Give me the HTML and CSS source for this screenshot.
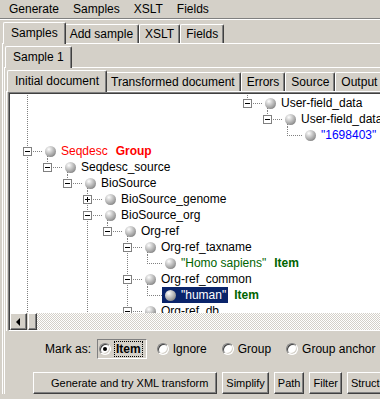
FILE: index.html
```html
<!DOCTYPE html>
<html lang="en">
<head>
    <meta charset="UTF-8">
    <title>XSLT generator</title>
    <link rel="stylesheet" href="styles.css">
</head>
<body>
<div class="app">
    <div class="menubar">
        <span class="menu">Generate</span>
        <span class="menu">Samples</span>
        <span class="menu">XSLT</span>
        <span class="menu">Fields</span>
    </div>

    <div class="tabpane outer">
        <div class="tabs">
            <div class="tab active">Samples</div>
            <div class="tab">Add sample</div>
            <div class="tab">XSLT</div>
            <div class="tab">Fields</div>
        </div>
        <div class="tabbody">
            <div class="tabpane">
                <div class="tabs">
                    <div class="tab active">Sample 1</div>
                </div>
                <div class="tabbody">
                    <div class="tabpane">
                        <div class="tabs">
                            <div class="tab active">Initial document</div>
                            <div class="tab">Transformed document</div>
                            <div class="tab">Errors</div>
                            <div class="tab">Source</div>
                            <div class="tab">Output</div>
                        </div>
                        <div class="tabbody">
                            <div class="scroll">
                                <div class="scroll-inner">
                                    <div class="tree">
                                        <!-- g = guide column, n = node column, cn = connector, lb = label -->
                                        <div class="row"><i class="g v"></i><i class="g"></i><i class="g"></i><i class="g"></i><i class="g"></i><i class="g"></i><i class="g"></i><i class="g"></i><i class="g"></i><i class="g"></i><i class="g"></i><i class="n"><b class="box"></b></i><i class="cn"></i><span class="lb open"><i class="ball"></i>User-field_data</span></div>
                                        <div class="row"><i class="g v"></i><i class="g"></i><i class="g"></i><i class="g"></i><i class="g"></i><i class="g"></i><i class="g"></i><i class="g"></i><i class="g"></i><i class="g"></i><i class="g"></i><i class="g"></i><i class="n"><b class="box"></b></i><i class="cn"></i><span class="lb open"><i class="ball"></i>User-field_data</span></div>
                                        <div class="row"><i class="g v"></i><i class="g"></i><i class="g"></i><i class="g"></i><i class="g"></i><i class="g"></i><i class="g"></i><i class="g"></i><i class="g"></i><i class="g"></i><i class="g"></i><i class="g"></i><i class="g"></i><i class="n"></i><i class="cn"></i><span class="lb blue"><i class="ball"></i>"1698403"</span></div>
                                        <div class="row"><i class="n dn"><b class="box"></b></i><i class="cn"></i><span class="lb open red"><i class="ball"></i>Seqdesc</span><b class="tag red">Group</b></div>
                                        <div class="row"><i class="g v"></i><i class="n"><b class="box"></b></i><i class="cn"></i><span class="lb open"><i class="ball"></i>Seqdesc_source</span></div>
                                        <div class="row"><i class="g v"></i><i class="g"></i><i class="n"><b class="box"></b></i><i class="cn"></i><span class="lb open"><i class="ball"></i>BioSource</span></div>
                                        <div class="row"><i class="g v"></i><i class="g"></i><i class="g"></i><i class="n dn"><b class="box plus"></b></i><i class="cn"></i><span class="lb"><i class="ball"></i>BioSource_genome</span></div>
                                        <div class="row"><i class="g v"></i><i class="g"></i><i class="g"></i><i class="n dn"><b class="box"></b></i><i class="cn"></i><span class="lb open"><i class="ball"></i>BioSource_org</span></div>
                                        <div class="row"><i class="g v"></i><i class="g"></i><i class="g"></i><i class="g v"></i><i class="n"><b class="box"></b></i><i class="cn"></i><span class="lb open"><i class="ball"></i>Org-ref</span></div>
                                        <div class="row"><i class="g v"></i><i class="g"></i><i class="g"></i><i class="g v"></i><i class="g"></i><i class="n dn"><b class="box"></b></i><i class="cn"></i><span class="lb open"><i class="ball"></i>Org-ref_taxname</span></div>
                                        <div class="row"><i class="g v"></i><i class="g"></i><i class="g"></i><i class="g v"></i><i class="g"></i><i class="g v"></i><i class="n"></i><i class="cn"></i><span class="lb green"><i class="ball"></i>"Homo sapiens"</span><b class="tag green">Item</b></div>
                                        <div class="row"><i class="g v"></i><i class="g"></i><i class="g"></i><i class="g v"></i><i class="g"></i><i class="n dn"><b class="box"></b></i><i class="cn"></i><span class="lb open"><i class="ball"></i>Org-ref_common</span></div>
                                        <div class="row"><i class="g v"></i><i class="g"></i><i class="g"></i><i class="g v"></i><i class="g"></i><i class="g v"></i><i class="n"></i><i class="cn"></i><span class="lb sel"><i class="ball"></i>"human"</span><b class="tag green">Item</b></div>
                                        <div class="row"><i class="g v"></i><i class="g"></i><i class="g"></i><i class="g v"></i><i class="g"></i><i class="n"><b class="box"></b></i><i class="cn"></i><span class="lb open"><i class="ball"></i>Org-ref_db</span></div>
                                    </div>
                                    <div class="hscroll">
                                        <div class="arrow"><i class="tri"></i></div>
                                        <div class="thumb"></div>
                                        <div class="track"></div>
                                    </div>
                                </div>
                            </div>
                        </div>
                    </div>

                    <div class="marks">
                        <span class="mark-label">Mark as:</span>
                        <label class="radio focus"><i class="circle on"></i><span class="rtext">Item</span></label>
                        <label class="radio"><i class="circle"></i><span class="rtext">Ignore</span></label>
                        <label class="radio"><i class="circle"></i><span class="rtext">Group</span></label>
                        <label class="radio"><i class="circle"></i><span class="rtext">Group anchor</span></label>
                    </div>

                    <div class="buttons">
                        <button class="btn wide">Generate and try XML transform</button>
                        <button class="btn">Simplify</button>
                        <button class="btn">Path</button>
                        <button class="btn">Filter</button>
                        <button class="btn">Structure</button>
                    </div>
                </div>
            </div>
        </div>
    </div>
</div>
</body>
</html>
```

FILE: styles.css
```css
body {
    margin: 0;
    background-color: #d4d0c8; /* classic window grey */
    color: #000;
    font-family: "Liberation Sans", Arial, sans-serif;
    font-size: 12px;
    overflow: hidden;
    height: 399px;
}
.app {
    width: 520px;
    padding-left: 2px;
}

/* menu bar */
.menubar {
    display: flex;
    height: 18px;
    align-items: center;
    padding-left: 2px;
    margin-left: -2px;
    border-bottom: 1px solid #808080;
}
.menu {
    padding: 0 7px;
}

/* tabbed panes */
.tabpane.outer {
    border-top: 1px solid #fff;
    margin-left: -2px;
    padding-left: 2px;
}
.tabs {
    display: flex;
    align-items: flex-end;
    height: 21px;
    padding: 2px 0 0 3px;
    border-bottom: 1px solid #fff;
}
.tab {
    display: flex;
    align-items: center;
    height: 19px;
    box-sizing: border-box;
    padding: 0 5px;
    border: 1px solid #fff;
    border-right-color: #404040;
    border-bottom: none;
    border-radius: 2px 2px 0 0;
    box-shadow: inset -1px 0 #808080;
    white-space: nowrap;
}
.tab.active {
    height: 22px;
    margin: 0 -2px -1px -2px;
    padding: 0 7px 1px 7px;
    background-color: #d4d0c8;
    position: relative;
    z-index: 1;
}
.tabbody {
    border-left: 1px solid #fff;
    padding-left: 1px;
}

/* tree in scroll pane */
.scroll {
    border-top: 1px solid #808080;
    border-left: 1px solid #808080;
    border-bottom: 1px solid #fff;
}
.scroll-inner {
    border-top: 1px solid #404040;
    border-left: 1px solid #404040;
}
.tree {
    height: 218px;
    padding: 1px 0 0 7px;
    background-color: #fff;
    overflow: hidden;
}
.row {
    display: flex;
    height: 16px;
    white-space: nowrap;
}
.g, .n {
    flex: none;
    width: 20px;
    position: relative;
}
.g.v::before, .n::before {
    content: "";
    position: absolute;
    left: 10px;
    width: 1px;
    top: 0;
    height: 8px;
    background: linear-gradient(#808080 50%, transparent 50%) 0 0 / 1px 2px repeat-y;
}
.g.v::before, .n.dn::before {
    height: auto;
    bottom: 0;
}
.n {
    display: flex;
    align-items: center;
    box-sizing: border-box;
    padding-left: 6px;
}
.n::after {
    content: "";
    position: absolute;
    left: 10px;
    right: 0;
    top: 8px;
    height: 1px;
    background: linear-gradient(to right, #808080 50%, transparent 50%) 0 0 / 2px 1px repeat-x;
}
.box {
    width: 9px;
    height: 9px;
    box-sizing: border-box;
    border: 1px solid #808080;
    background-color: #fff;
    position: relative;
    z-index: 1;
}
.box::before {
    content: "";
    position: absolute;
    left: 1px;
    top: 3px;
    width: 5px;
    height: 1px;
    background-color: #000;
}
.box.plus::after {
    content: "";
    position: absolute;
    left: 3px;
    top: 1px;
    width: 1px;
    height: 5px;
    background-color: #000;
}
.cn {
    flex: none;
    width: 5px;
    background: linear-gradient(to right, #808080 50%, transparent 50%) 0 8px / 2px 1px repeat-x;
}
.lb {
    display: flex;
    align-items: center;
    padding: 0 2px 0 3px;
    position: relative;
}
.lb.open::after {
    content: "";
    position: absolute;
    left: 5px;
    top: 9px;
    bottom: 0;
    width: 1px;
    background: linear-gradient(#808080 50%, transparent 50%) 0 0 / 1px 2px repeat-y;
}
.ball {
    width: 11px;
    height: 11px;
    margin-right: 5px;
    border-radius: 50%;
    background: radial-gradient(circle at 35% 30%, #fff 0, #dcdcdc 22%, #a2a2a2 62%, #5c5c5c 100%);
    position: relative;
    z-index: 1;
}
.lb.sel {
    background-color: #0a246a;
    color: #fff;
}
.tag {
    display: flex;
    align-items: center;
    margin-left: 6px;
}
.red { color: #f00; }
.blue { color: #00f; }
.green { color: #006400; }

/* horizontal scroll bar */
.hscroll {
    display: flex;
    height: 17px;
}
.arrow, .thumb {
    box-sizing: border-box;
    border: 1px solid;
    border-color: #fff #404040 #404040 #fff;
    box-shadow: inset -1px -1px #808080;
    background-color: #d4d0c8;
}
.arrow {
    width: 17px;
    display: flex;
    align-items: center;
    justify-content: center;
}
.tri {
    width: 0;
    height: 0;
    margin-right: 2px;
    border-top: 4px solid transparent;
    border-bottom: 4px solid transparent;
    border-right: 4px solid #000;
}
.thumb {
    width: 9px;
    margin-left: 1px;
}
.track {
    flex: 1;
    background: repeating-conic-gradient(#fff 0 25%, #d4d0c8 0 50%) 0 0 / 2px 2px;
}

/* mark as row */
.marks {
    display: flex;
    align-items: center;
    height: 20px;
    margin: 8px 0 13px 39px;
}
.mark-label {
    margin-right: 6px;
}
.radio {
    display: flex;
    align-items: center;
    gap: 4px;
    height: 18px;
    padding: 0 4px 0 1px;
    margin-right: 8px;
    border: 1px solid transparent;
}
.radio.focus {
    border-color: #808080 #fff #fff #808080;
}
.radio.focus .rtext {
    font-weight: bold;
    outline: 1px dotted #000;
    padding: 0 1px;
}
.circle {
    width: 12px;
    height: 12px;
    box-sizing: border-box;
    border-radius: 50%;
    border: 1px solid;
    border-color: #808080 #fff #fff #808080;
    box-shadow: inset 1px 1px #404040, inset -1px -1px #d4d0c8;
    background-color: #fff;
    display: flex;
    align-items: center;
    justify-content: center;
}
.circle.on::after {
    content: "";
    width: 4px;
    height: 4px;
    border-radius: 50%;
    background-color: #000;
}

/* button row */
.buttons {
    display: flex;
    gap: 5px;
    margin-left: 27px;
}
.btn {
    height: 22px;
    padding: 0 3px;
    border: 1px solid;
    border-color: #fff #404040 #404040 #fff;
    box-shadow: inset -1px -1px #808080;
    background-color: #d4d0c8;
    font-family: "Liberation Sans", Arial, sans-serif;
    font-size: 11px;
    color: #000;
    white-space: nowrap;
}
.btn.wide {
    padding: 0 8px 0 17px;
}
```
